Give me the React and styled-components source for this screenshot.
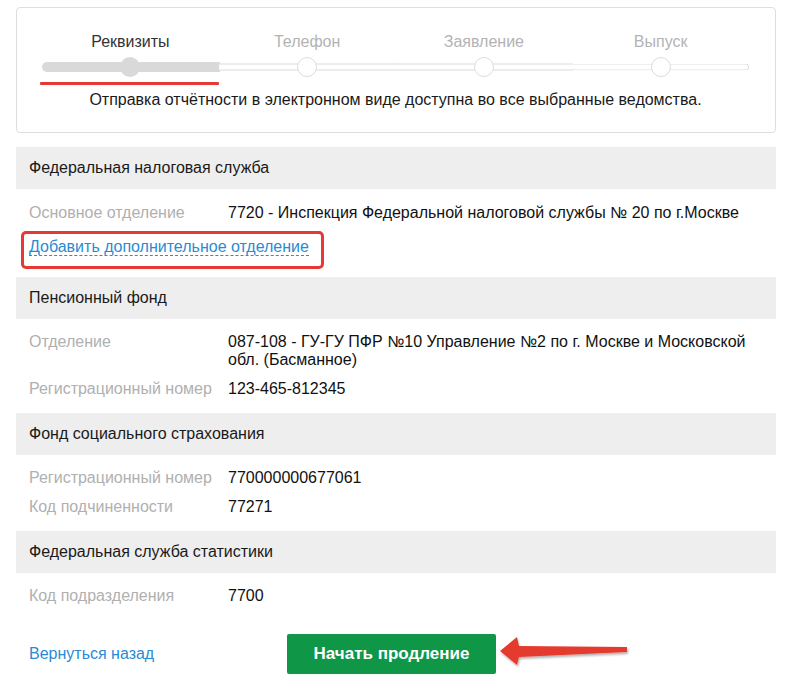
import styled, { createGlobalStyle } from "styled-components";

const GlobalStyle = createGlobalStyle`
  body {
    margin: 0;
    background: #fff;
    font-family: "Liberation Sans", Arial, sans-serif;
    color: #1a1a1a;
  }
`;

const steps = ["Реквизиты", "Телефон", "Заявление", "Выпуск"];

const sections = [
  {
    title: "Федеральная налоговая служба",
    rows: [
      ["Основное отделение", "7720 - Инспекция Федеральной налоговой службы № 20 по г.Москве"],
    ],
    addLink: true,
  },
  {
    title: "Пенсионный фонд",
    rows: [
      ["Отделение", "087-108 - ГУ-ГУ ПФР №10 Управление №2 по г. Москве и Московской обл. (Басманное)"],
      ["Регистрационный номер", "123-465-812345"],
    ],
  },
  {
    title: "Фонд социального страхования",
    rows: [
      ["Регистрационный номер", "770000000677061"],
      ["Код подчиненности", "77271"],
    ],
  },
  {
    title: "Федеральная служба статистики",
    rows: [["Код подразделения", "7700"]],
  },
];

const App = () => {
  return (
    <Page>
      <GlobalStyle />
      <StepsCard>
        <StepsGrid>
          {steps.map((s, i) => (
            <Step key={s}>
              <StepLabel $active={i === 0}>{s}</StepLabel>
              <Segment $done={i === 0} $first={i === 0} $last={i === steps.length - 1}>
                <Dot $done={i === 0} />
              </Segment>
            </Step>
          ))}
        </StepsGrid>
        <ActiveMark />
        <Notice>Отправка отчётности в электронном виде доступна во все выбранные ведомства.</Notice>
      </StepsCard>

      {sections.map((sec) => (
        <Section key={sec.title}>
          <SectionHeader>{sec.title}</SectionHeader>
          <Rows $compact={sec.addLink}>
            {sec.rows.map(([label, value]) => (
              <Row key={label}>
                <Label>{label}</Label>
                <Value>{value}</Value>
              </Row>
            ))}
            {sec.addLink && (
              <Highlight>
                <DashedLink href="#">Добавить дополнительное отделение</DashedLink>
              </Highlight>
            )}
          </Rows>
        </Section>
      ))}

      <Footer>
        <BackLink href="#">Вернуться назад</BackLink>
        <StartButton>Начать продление</StartButton>
        <Arrow width="140" height="40" viewBox="0 0 140 40">
          <defs>
            <filter id="sh" x="-10%" y="-30%" width="130%" height="170%">
              <feDropShadow dx="1" dy="2" stdDeviation="1.2" floodColor="#000" floodOpacity="0.3" />
            </filter>
          </defs>
          <polygon
            points="2,20 19,6 21,15 129,16 129,21 21,26 19,34"
            fill="#e53b2f"
            filter="url(#sh)"
          />
        </Arrow>
      </Footer>
    </Page>
  );
};

const Page = styled.div`
  width: 760px;
  padding: 7px 10px 0 16px;
`;

const StepsCard = styled.div`
  border: 1px solid #dedede;
  border-radius: 4px;
  padding: 25px 26px 23px 25px;
`;

const StepsGrid = styled.div`
  display: grid;
  grid-template-columns: repeat(4, 1fr);
`;

const Step = styled.div`
  display: flex;
  flex-direction: column;
  align-items: stretch;
`;

const StepLabel = styled.div`
  text-align: center;
  font-size: 16px;
  line-height: 18px;
  color: ${(p) => (p.$active ? "#333" : "#b3b3b3")};
  margin-bottom: 6px;
`;

const Segment = styled.div`
  position: relative;
  height: 20px;
  display: flex;
  justify-content: center;
  align-items: center;

  &::before {
    content: "";
    position: absolute;
    left: 0;
    right: ${(p) => (p.$last ? "0" : "-1px")};
    top: 50%;
    transform: translateY(-50%);
    box-sizing: border-box;
    height: ${(p) => (p.$done ? "10px" : "7px")};
    background: ${(p) => (p.$done ? "#d9d9d9" : "#fff")};
    border: ${(p) => (p.$done ? "none" : "1px solid #dcdcdc")};
    border-left: none;
    border-right: ${(p) => (p.$last ? "1px solid #dcdcdc" : "none")};
    border-radius: ${(p) => (p.$first ? "5px 0 0 5px" : p.$last ? "0 4px 4px 0" : "0")};
  }
`;

const Dot = styled.div`
  position: relative;
  z-index: 1;
  box-sizing: border-box;
  width: 20px;
  height: 20px;
  border-radius: 50%;
  background: ${(p) => (p.$done ? "#d9d9d9" : "#fff")};
  border: ${(p) => (p.$done ? "none" : "1px solid #dcdcdc")};
`;

const ActiveMark = styled.div`
  width: 179px;
  height: 3px;
  margin: 5px 0 0 -2px;
  background: #e53935;
  border-radius: 1px;
`;

const Notice = styled.p`
  margin: 6px 0 0;
  text-align: center;
  font-size: 16px;
  line-height: 18px;
  color: #1a1a1a;
`;

const Section = styled.section`
  margin-top: 14px;

  & + & {
    margin-top: 0;
  }
`;

const SectionHeader = styled.div`
  background: #eeeeee;
  padding: 0 13px;
  height: 42px;
  display: flex;
  align-items: center;
  font-size: 16px;
  color: #1a1a1a;
`;

const Rows = styled.div`
  display: flex;
  flex-direction: column;
  gap: 11px;
  padding: ${(p) => (p.$compact ? "15px 13px 8px" : "14px 13px 15px")};
`;

const Row = styled.div`
  display: grid;
  grid-template-columns: 199px 1fr;
  font-size: 16px;
  line-height: 18px;
`;

const Label = styled.div`
  color: #b0b0b0;
`;

const Value = styled.div`
  color: #111;
  padding-right: 10px;
`;

const Highlight = styled.div`
  align-self: flex-start;
  margin: -2px 0 0 -8px;
  padding: 4px 12px 10px 5px;
  border: 3px solid #e53935;
  border-radius: 5px;
`;

const DashedLink = styled.a`
  display: inline-block;
  font-size: 16px;
  line-height: 17px;
  color: #2a8bd3;
  text-decoration: none;
  border-bottom: 1px dashed #2a8bd3;
`;

const Footer = styled.div`
  position: relative;
  display: grid;
  grid-template-columns: 258px 209px;
  align-items: center;
  padding: 14px 13px 0;
`;

const BackLink = styled.a`
  font-size: 16px;
  color: #2a8bd3;
  text-decoration: none;
`;

const StartButton = styled.button`
  height: 40px;
  border: none;
  border-radius: 2px;
  background: #0f9747;
  color: #fff;
  font-family: "Liberation Sans", Arial, sans-serif;
  font-size: 17px;
  font-weight: bold;
  cursor: pointer;
`;

const Arrow = styled.svg`
  position: absolute;
  left: 482px;
  top: 11px;
  overflow: visible;
`;

export default App;
